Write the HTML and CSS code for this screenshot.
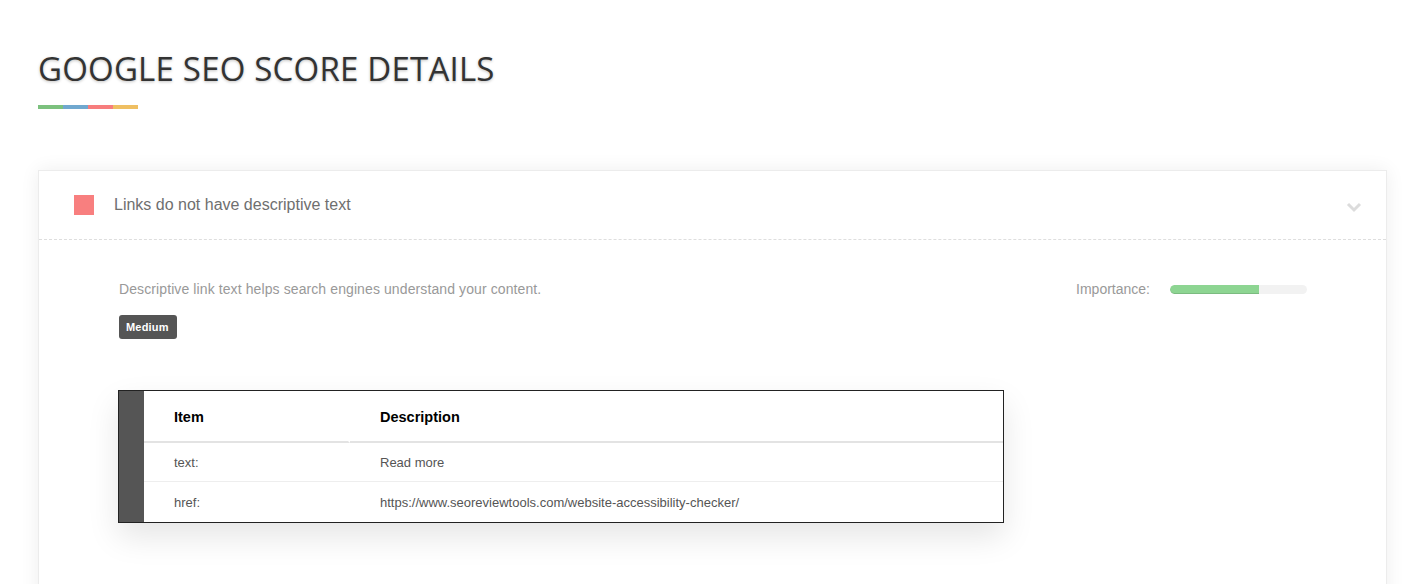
FILE: index.html
```html
<!DOCTYPE html>
<html>
<head>
<meta charset="utf-8">
<link rel="stylesheet" href="styles.css">
</head>
<body>
<div class="page">
  <h1 class="title">GOOGLE SEO SCORE DETAILS</h1>
  <div class="colorbar"><span class="c1"></span><span class="c2"></span><span class="c3"></span><span class="c4"></span></div>

  <div class="card">
    <div class="card-head">
      <span class="status"></span>
      <span class="head-text">Links do not have descriptive text</span>
      <svg class="chevron" width="16" height="12" viewBox="0 0 16 12"><path d="M2 3 L8 9 L14 3" fill="none" stroke="#dcdcdc" stroke-width="3"/></svg>
    </div>
    <div class="card-body">
      <div class="info-row">
        <div class="info-left">
          <p class="desc">Descriptive link text helps search engines understand your content.</p>
          <span class="badge">Medium</span>
        </div>
        <div class="importance">
          <span class="imp-label">Importance:</span>
          <div class="imp-bar"><div class="imp-fill" style="width:65%"></div></div>
        </div>
      </div>

      <div class="table-wrap">
        <div class="stripe"></div>
        <table class="tbl">
          <thead>
            <tr><th class="col1">Item</th><th>Description</th></tr>
          </thead>
          <tbody>
            <tr><td class="col1">text:</td><td>Read more</td></tr>
            <tr><td class="col1">href:</td><td>https://www.seoreviewtools.com/website-accessibility-checker/</td></tr>
          </tbody>
        </table>
      </div>
    </div>
  </div>
</div>
</body>
</html>
```
FILE: styles.css
```css
html, body {
  margin: 0;
  padding: 0;
  background: #fff;
}
body {
  font-family: "Liberation Sans", Arial, sans-serif;
}
.page {
  padding: 47px 41px 0 38px;
}
.title {
  margin: 0;
  font-family: "Open Sans", "Liberation Sans", sans-serif;
  font-weight: 400;
  font-size: 33px;
  line-height: 44px;
  letter-spacing: 0.2px;
  color: #333;
  text-shadow: 0 1px 3px rgba(0,0,0,0.25);
}
.colorbar {
  display: flex;
  margin-top: 14px;
  width: 100px;
  height: 4px;
}
.colorbar span { flex: 1; }
.c1 { background: #7cc17e; }
.c2 { background: #70a8cf; }
.c3 { background: #f77d7d; }
.c4 { background: #efbf62; }

.card {
  margin-top: 61px;
  background: #fff;
  border: 1px solid #ececec;
  box-shadow: 0 0 18px rgba(0,0,0,0.07);
  height: 430px;
}
.card-head {
  display: flex;
  align-items: center;
  height: 68px;
  padding: 0 24px 0 35px;
  border-bottom: 1px dashed #dedede;
}
.status {
  width: 20px;
  height: 20px;
  background: #f87f7f;
  flex: none;
}
.head-text {
  margin-left: 20px;
  font-size: 16px;
  color: #6f6f6f;
  flex: 1;
}
.chevron {
  margin-top: 4px;
}
.card-body {
  padding: 40px 79px 0 80px;
}
.info-row {
  display: flex;
  justify-content: space-between;
  align-items: flex-start;
}
.desc {
  margin: 0;
  font-size: 14px;
  line-height: 18px;
  color: #999;
  letter-spacing: 0.1px;
}
.badge {
  display: inline-block;
  margin-top: 17px;
  background: #555;
  color: #fff;
  font-size: 11px;
  font-weight: bold;
  height: 24px;
  line-height: 24px;
  padding: 0 8px 0 7px;
  border-radius: 3px;
  letter-spacing: 0.2px;
}
.importance {
  display: flex;
  align-items: center;
  gap: 20px;
  margin-top: 1px;
}
.imp-label {
  font-size: 14px;
  color: #999;
}
.imp-bar {
  width: 137px;
  height: 9px;
  background: #f2f2f2;
  border-radius: 5px;
  overflow: hidden;
}
.imp-fill {
  height: 100%;
  background: #8dd592;
  box-shadow: inset 0 -1px 0 rgba(0,0,0,0.12);
  border-radius: 5px 0 0 5px;
}
.table-wrap {
  display: flex;
  width: 884px;
  margin-top: 51px;
  margin-left: -1px;
  border: 1px solid #222;
  box-shadow: 0 14px 30px rgba(0,0,0,0.1);
}
.stripe {
  width: 25px;
  background: #555;
  flex: none;
}
.tbl {
  flex: 1;
  border-collapse: separate;
  border-spacing: 0;
}
.tbl th {
  text-align: left;
  font-size: 14.5px;
  font-weight: bold;
  color: #000;
  height: 48px;
  padding: 2px 30px 0 30px;
  border-bottom: 2px solid #e3e3e3;
}
.tbl th.col1 {
  border-right: 2px solid #fff;
}
.tbl td {
  font-size: 13px;
  color: #555;
  height: 38px;
  padding: 0 30px;
  border-bottom: 1px solid #eee;
}
.tbl tbody tr:last-child td {
  border-bottom: none;
  height: 40px;
}
.tbl .col1 {
  width: 144px;
}
```
